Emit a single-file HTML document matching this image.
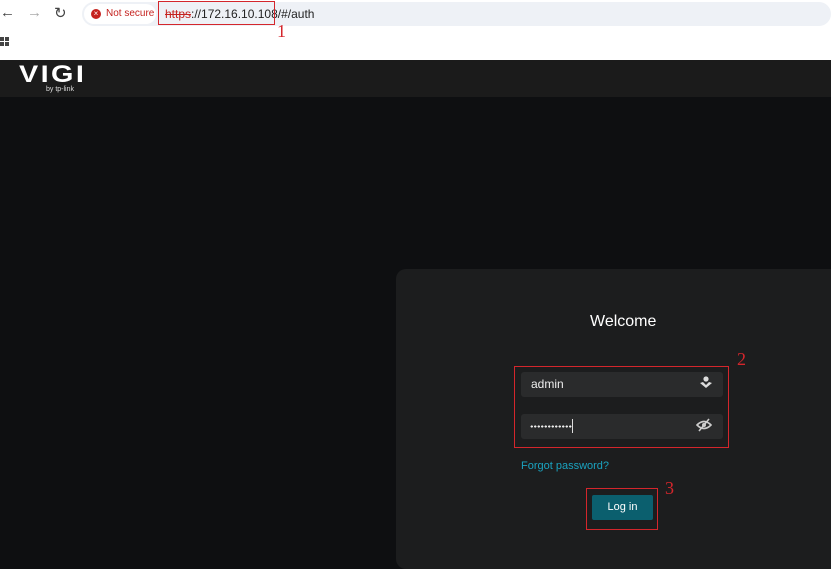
<!DOCTYPE html>
<html><head><style>
body{margin:0;width:831px;height:551px;overflow:hidden;background:#0e0f11;font-family:"Liberation Sans",sans-serif;position:relative}
.a{position:absolute}
</style></head><body>
<div class="a" style="left:0;top:0;width:831px;height:60px;background:#fff"></div>
<div class="a" style="left:0;top:4px;font-size:15px;color:#444">&#8592;</div>
<div class="a" style="left:27px;top:4px;font-size:15px;color:#aaa">&#8594;</div>
<div class="a" style="left:54px;top:4px;font-size:15px;color:#444">&#8635;</div>
<div class="a" style="left:82px;top:2px;width:749px;height:24px;background:#eef1f6;border-radius:12px"></div>
<div class="a" style="left:84px;top:4px;width:72px;height:20px;background:#fff;border-radius:10px"></div>
<div class="a" style="left:91px;top:9px;width:10px;height:10px;border-radius:50%;background:#c5221f;color:#fff;font-size:8px;line-height:10px;text-align:center">×</div>
<div class="a" style="left:106px;top:8px;font-size:10px;color:#c5221f">Not secure</div>
<div class="a" style="left:165px;top:7px;font-size:12px;color:#222"><span style="color:#c5221f;text-decoration:line-through">https</span>://172.16.10.108/#/auth</div>
<div class="a" style="left:158px;top:1px;width:117px;height:24px;border:1.5px solid #d4262c;box-sizing:border-box"></div>
<div class="a" style="left:277px;top:21px;font-family:'Liberation Serif',serif;font-size:18px;color:#d4262c">1</div>
<div class="a" style="left:0;top:37px;width:9px;height:9px;background:
linear-gradient(#444,#444) 0 0/4px 4px no-repeat,linear-gradient(#444,#444) 5px 0/4px 4px no-repeat,linear-gradient(#444,#444) 0 5px/4px 4px no-repeat,linear-gradient(#444,#444) 5px 5px/4px 4px no-repeat"></div>
<div class="a" style="left:0;top:60px;width:831px;height:37px;background:#1b1b1b"></div>
<div class="a" style="left:19px;top:61px;font-size:24px;font-weight:bold;color:#fff;letter-spacing:2px;transform:scaleX(1.2);transform-origin:left">VIGI</div>
<div class="a" style="left:46px;top:86px;font-size:7px;color:#ddd">by tp-link</div>
<div class="a" style="left:396px;top:269px;width:450px;height:300px;background:#1c1d1e;border-radius:10px"></div>
<div class="a" style="left:590px;top:313px;font-size:16px;color:#fff">Welcome</div>
<div class="a" style="left:521px;top:372px;width:202px;height:25px;background:#2a2b2c;border-radius:3px"></div>
<div class="a" style="left:531px;top:377px;font-size:12px;color:#eee">admin</div>
<svg class="a" style="left:700px;top:376px" width="12" height="14" viewBox="0 0 12 14"><circle cx="6" cy="3" r="2.6" fill="#ddd"/><path d="M0 7 L6 12 L12 7 L9 6 L6 9 L3 6Z" fill="#ddd"/></svg>
<div class="a" style="left:521px;top:414px;width:202px;height:25px;background:#2a2b2c;border-radius:3px"></div>
<div class="a" style="left:530px;top:425px;width:42px;height:3px;background:radial-gradient(circle,#eee 1px,transparent 1.3px) 0 0/3.5px 3px repeat-x"></div>
<div class="a" style="left:572px;top:419px;width:1px;height:14px;background:#ddd"></div>
<svg class="a" style="left:696px;top:418px" width="16" height="14" viewBox="0 0 16 14"><path d="M1 7 Q8 0 15 7 Q8 14 1 7Z" fill="none" stroke="#ccc" stroke-width="1.6"/><circle cx="8" cy="7" r="2" fill="#ccc"/><path d="M3 13 L13 1" stroke="#ccc" stroke-width="1.6"/></svg>
<div class="a" style="left:514px;top:366px;width:215px;height:82px;border:1.5px solid #d4262c;box-sizing:border-box"></div>
<div class="a" style="left:737px;top:349px;font-family:'Liberation Serif',serif;font-size:18px;color:#d4262c">2</div>
<div class="a" style="left:521px;top:460px;font-size:11px;color:#1aa3c0">Forgot password?</div>
<div class="a" style="left:592px;top:495px;width:61px;height:25px;background:#0b5f6e;border-radius:2px;color:#fff;font-size:11px;line-height:25px;text-align:center">Log in</div>
<div class="a" style="left:586px;top:488px;width:72px;height:42px;border:1.5px solid #d4262c;box-sizing:border-box"></div>
<div class="a" style="left:665px;top:478px;font-family:'Liberation Serif',serif;font-size:18px;color:#d4262c">3</div>
</body></html>
